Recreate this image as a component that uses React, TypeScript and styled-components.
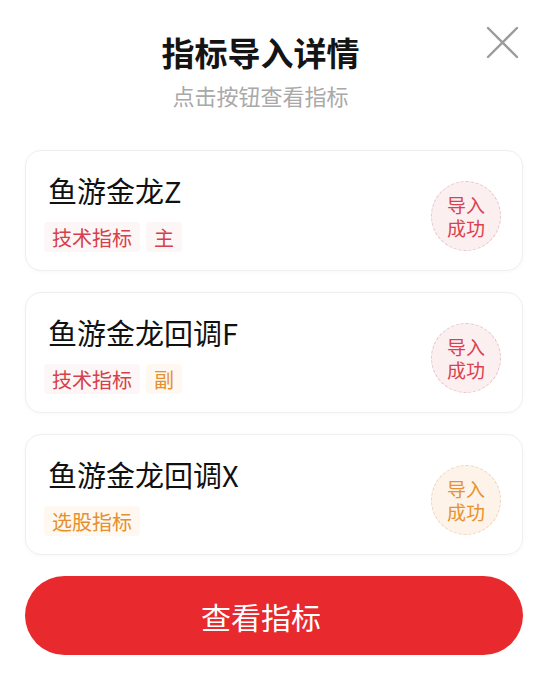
import React from "react";
import styled, { createGlobalStyle } from "styled-components";

const Global = createGlobalStyle`
  html, body { margin: 0; padding: 0; background: #ffffff; }
  body { font-family: "Noto Sans CJK SC", "Noto Sans", sans-serif; }
  * { box-sizing: border-box; }
`;

const Page = styled.div`
  position: relative;
  width: 551px;
  height: 681px;
  padding: 0 28px 0 25px;
  display: flex;
  flex-direction: column;
  background: #fff;
`;

const Header = styled.header`
  display: flex;
  flex-direction: column;
  align-items: center;
  padding: 30px 2px 0 0;
  margin-left: -25px;
`;

const Title = styled.h1`
  margin: 0;
  font-size: 33px;
  line-height: 44px;
  font-weight: 700;
  color: #141414;
`;

const Subtitle = styled.p`
  margin: 6px 0 0;
  font-size: 22px;
  line-height: 30px;
  color: #a9a9a9;
`;

const Close = styled.button`
  position: absolute;
  top: 25px;
  right: 31px;
  width: 35px;
  height: 35px;
  padding: 0;
  border: 0;
  background: transparent;
  display: flex;
  align-items: center;
  justify-content: center;
`;

const List = styled.div`
  display: flex;
  flex-direction: column;
  gap: 21px;
  margin-top: 40px;
`;

const Card = styled.div`
  display: flex;
  align-items: center;
  height: 121px;
  padding: 0 21px 0 22px;
  border: 1px solid #efefef;
  border-radius: 16px;
  background: #fff;
  box-shadow: 0 1px 4px rgba(0, 0, 0, 0.03);
`;

const Info = styled.div`
  flex: 1;
  display: flex;
  flex-direction: column;
  padding-top: 3px;
`;

const Name = styled.div`
  font-size: 29px;
  line-height: 36px;
  color: #111;
`;

const Tags = styled.div`
  display: flex;
  gap: 6px;
  margin-top: 14px;
  margin-left: -4px;
`;

const Tag = styled.span<{ $tone: "red" | "orange" }>`
  display: inline-flex;
  align-items: center;
  height: 30px;
  padding: 0 8px;
  border-radius: 4px;
  font-size: 20px;
  color: ${(p) => (p.$tone === "red" ? "#d5404b" : "#e58f2e")};
  background: ${(p) => (p.$tone === "red" ? "#fdf6f6" : "#fef8f0")};
`;

const Badge = styled.div<{ $tone: "red" | "orange" }>`
  width: 70px;
  height: 70px;
  margin-top: 11px;
  border-radius: 50%;
  display: flex;
  align-items: center;
  justify-content: center;
  color: ${(p) => (p.$tone === "red" ? "#d8434f" : "#e7922f")};
  background: ${(p) => (p.$tone === "red" ? "#fcefef" : "#fdf3e8")};
  border: 1px dashed ${(p) => (p.$tone === "red" ? "#e6c2c6" : "#ecd3b8")};
`;

const BadgeText = styled.span`
  width: 40px;
  font-size: 19px;
  line-height: 23px;
  text-align: center;
  word-break: break-all;
`;

const Action = styled.button`
  margin-top: 21px;
  height: 79px;
  width: 100%;
  padding: 0 26px 0 0;
  border: 0;
  border-radius: 40px;
  background: #e8292d;
  color: #fff;
  font-family: "Noto Sans CJK SC", sans-serif;
  font-size: 30px;
`;

type Tone = "red" | "orange";
const items: { name: string; tags: { text: string; tone: Tone }[]; tone: Tone }[] = [
  { name: "鱼游金龙Z", tags: [{ text: "技术指标", tone: "red" }, { text: "主", tone: "red" }], tone: "red" },
  { name: "鱼游金龙回调F", tags: [{ text: "技术指标", tone: "red" }, { text: "副", tone: "orange" }], tone: "red" },
  { name: "鱼游金龙回调X", tags: [{ text: "选股指标", tone: "orange" }], tone: "orange" },
];

export default function App() {
  return (
    <>
      <Global />
      <Page>
        <Header>
          <Title>指标导入详情</Title>
          <Subtitle>点击按钮查看指标</Subtitle>
        </Header>
        <Close aria-label="关闭">
          <svg width="33" height="33" viewBox="0 0 33 33">
            <path d="M2 2 L31 31 M31 2 L2 31" stroke="#9b9b9b" strokeWidth="2.4" strokeLinecap="round" />
          </svg>
        </Close>
        <List>
          {items.map((it) => (
            <Card key={it.name}>
              <Info>
                <Name>{it.name}</Name>
                <Tags>
                  {it.tags.map((t) => (
                    <Tag key={t.text} $tone={t.tone}>{t.text}</Tag>
                  ))}
                </Tags>
              </Info>
              <Badge $tone={it.tone}>
                <BadgeText>导入成功</BadgeText>
              </Badge>
            </Card>
          ))}
        </List>
        <Action>查看指标</Action>
      </Page>
    </>
  );
}
